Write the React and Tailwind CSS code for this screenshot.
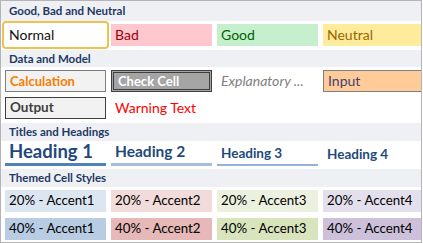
import React from 'react';

const cell = 'h-[22px] w-[101px] shrink-0 flex items-center px-[4px] leading-none whitespace-nowrap overflow-hidden';

const SectionHeader = ({ title, h }) => (
  <div className={`${h} shrink-0 flex items-center pl-[8px] bg-[#eef0f4] text-[11.5px] font-bold text-[#1f3864]`}>
    {title}
  </div>
);

const themed = [
  [
    { label: '20% - Accent1', bg: 'bg-[#dce6f1]' },
    { label: '20% - Accent2', bg: 'bg-[#f2dcdb]' },
    { label: '20% - Accent3', bg: 'bg-[#ebf1de]' },
    { label: '20% - Accent4', bg: 'bg-[#e4dfec]' },
  ],
  [
    { label: '40% - Accent1', bg: 'bg-[#b8cce4]' },
    { label: '40% - Accent2', bg: 'bg-[#e6b8b7]' },
    { label: '40% - Accent3', bg: 'bg-[#d8e4bc]' },
    { label: '40% - Accent4', bg: 'bg-[#ccc0da]' },
  ],
];

export default function App() {
  return (
    <div className="w-[422px] h-[243px] overflow-hidden bg-white border border-[#b4b4b4] flex flex-col font-['Lato',sans-serif] text-black">
      <SectionHeader title="Good, Bad and Neutral" h="h-[20px]" />
      <div className="flex gap-[5px] pl-[4px] pt-[3px] pb-[4px] overflow-hidden text-[14px]">
        <div className={`${cell} bg-white outline-2 outline-offset-1 outline-[#ecc250] rounded-[1px] text-[#111]`}>Normal</div>
        <div className={`${cell} bg-[#ffc7ce] text-[#9c0006]`}>Bad</div>
        <div className={`${cell} bg-[#c6efce] text-[#006100]`}>Good</div>
        <div className={`${cell} bg-[#ffeb9c] text-[#9c6500]`}>Neutral</div>
      </div>

      <SectionHeader title="Data and Model" h="h-[17px]" />
      <div className="flex flex-col gap-[5px] pl-[4px] pt-[3px] pb-[4px] overflow-hidden text-[14px]">
        <div className="flex gap-[5px]">
          <div className={`${cell} bg-[#f2f2f2] border border-[#7f7f7f] font-bold text-[#fa7d00] text-[13px]`}>Calculation</div>
          <div className={`${cell} bg-[#a5a5a5] border-[3px] border-double border-[#3f3f3f] font-bold text-white px-[2px] text-[13px]`}>Check Cell</div>
          <div className={`${cell} italic text-[#7f7f7f]`}>Explanatory ...</div>
          <div className={`${cell} bg-[#ffcc99] border border-[#7f7f7f] text-[#3f3f76]`}>Input</div>
        </div>
        <div className="flex gap-[5px]">
          <div className={`${cell} bg-[#f2f2f2] border border-[#3f3f3f] font-bold text-[#3f3f3f] text-[13.5px]`}>Output</div>
          <div className={`${cell} text-[#ff0000]`}>Warning Text</div>
        </div>
      </div>

      <SectionHeader title="Titles and Headings" h="h-[18px]" />
      <div className="flex gap-[5px] pl-[4px] pb-[3px] overflow-hidden">
        <div className="h-[25px] w-[101px] shrink-0 flex items-center px-[4px] border-b-[3px] border-[#4f81bd] text-[18.5px] font-bold text-[#1f497d] whitespace-nowrap">Heading 1</div>
        <div className="h-[25px] w-[101px] shrink-0 flex items-center px-[4px] border-b-[3px] border-[#a7bfde] text-[15.5px] font-bold text-[#1f497d] whitespace-nowrap">Heading 2</div>
        <div className="h-[25px] w-[101px] shrink-0 flex items-center px-[4px] pt-[1px] border-b-[2px] border-[#95b3d7] text-[13.5px] font-bold text-[#1f497d] whitespace-nowrap">Heading 3</div>
        <div className="h-[25px] w-[101px] shrink-0 flex items-center px-[4px] pt-[1px] text-[13.5px] font-bold text-[#1f497d] whitespace-nowrap">Heading 4</div>
      </div>

      <SectionHeader title="Themed Cell Styles" h="h-[18px]" />
      <div className="flex flex-col gap-[6px] pl-[4px] pt-[3px] overflow-hidden text-[13.3px]">
        {themed.map((row, i) => (
          <div key={i} className="flex gap-[5px]">
            {row.map((c) => (
              <div key={c.label} className={`${cell} ${c.bg}`}>{c.label}</div>
            ))}
          </div>
        ))}
      </div>
    </div>
  );
}
